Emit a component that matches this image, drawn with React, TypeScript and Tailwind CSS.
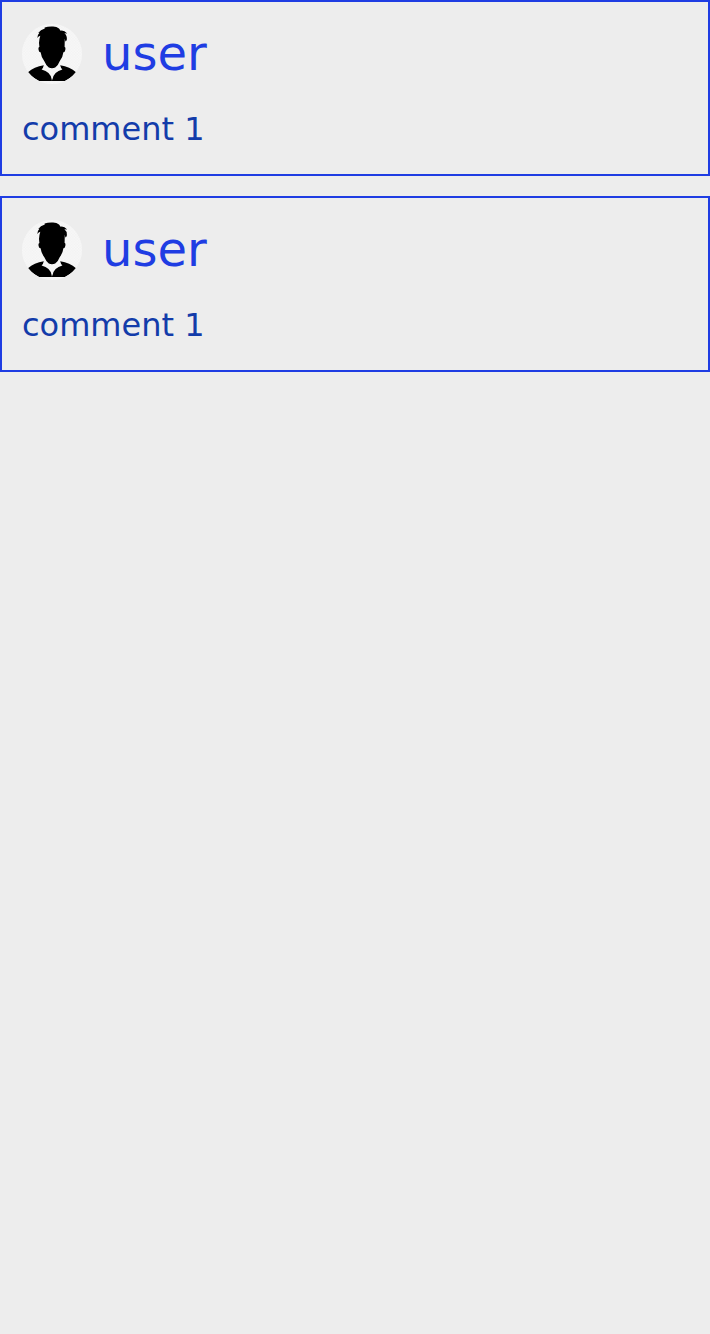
const comments = [
  { id: 1, author: "user", text: "comment 1" },
  { id: 2, author: "user", text: "comment 1" },
];

function Avatar() {
  return (
    <svg viewBox="0 0 60 60" className="size-[60px] shrink-0 rounded-full bg-[#f8f8f8]" aria-hidden="true">
      <defs>
        <pattern id="checks" width="2.8" height="2.8" patternUnits="userSpaceOnUse">
          <path d="M0 0h1.4v1.4H0zM1.4 1.4h1.4v1.4H1.4z" fill="#f2f2f2" />
        </pattern>
      </defs>
      <rect width="60" height="60" fill="url(#checks)" />
      <path d="M15.3 13.9Q15.6 10.6 17.4 8.7L16.2 8.9Q18.5 5.4 22.8 4.4L22.6 3.4Q26 2.5 30 2.6Q34.4 2.3 37 4.4L38.6 6.7Q42 6 45.2 9.6L42.4 9.2Q45 11 44.9 15.2Q44.6 17 43.4 17.4L42.8 14.4L42.6 23Q43.8 23 43.3 26Q42.8 28.5 41.4 28.3Q40.8 33.5 37.8 37Q36.2 41.4 33.2 43.4Q30 45 26.8 43.4Q24 41.4 22.2 37Q19.3 33.5 18.6 28.3Q17 28.5 16.6 26Q16.1 23 17.4 23L17 19Q17.2 15 18.3 11.8Q16.6 12 15.3 13.9Z" />
      <path d="M6 48.3Q12 43 21.8 41.3Q21.3 44 19.6 45.4Q28.4 47.6 29.6 55V57H17Q10.5 54 6 48.3ZM54 48.3Q48 43 38.2 41.3Q38.7 44 40.4 45.4Q31.8 47.6 30.6 55V57H43Q49.5 54 54 48.3Z" />
      <path d="M29 57L29.8 55.2H30.5L31.2 57Z" />
    </svg>
  );
}

export default function App() {
  return (
    <main className="flex min-h-screen flex-col gap-5 bg-[#ededed] font-['DejaVu_Sans',sans-serif]">
      {comments.map((comment) => (
        <article key={comment.id} className="flex flex-col gap-5 border-2 border-[#1f3de3] p-5">
          <header className="flex h-16 items-center gap-5">
            <Avatar />
            <h2 className="pb-0.5 text-[48px] leading-[62px] text-[#1f3de3]">{comment.author}</h2>
          </header>
          <p className="pb-0.5 text-[32px] leading-[46px] text-[#133caa]">{comment.text}</p>
        </article>
      ))}
    </main>
  );
}
